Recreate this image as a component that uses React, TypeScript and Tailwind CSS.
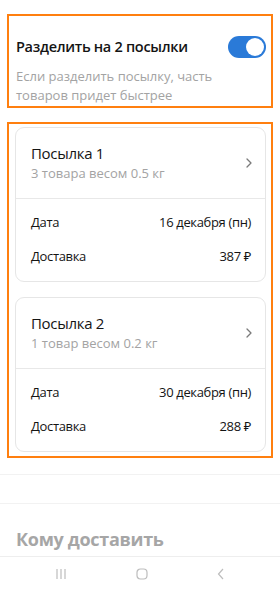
import React, { useState } from 'react'

interface Parcel {
  title: string
  subtitle: string
  date: string
  price: string
}

const parcels: Parcel[] = [
  { title: 'Посылка 1', subtitle: '3 товара весом 0.5 кг', date: '16 декабря (пн)', price: '387 ₽' },
  { title: 'Посылка 2', subtitle: '1 товар весом 0.2 кг', date: '30 декабря (пн)', price: '288 ₽' },
]

const ParcelCard: React.FC<{ parcel: Parcel }> = ({ parcel }) => (
  <div className="rounded-[9px] border border-[#e6e6e6] bg-white">
    <div className="flex items-center justify-between pl-[15px] pr-[13px] pt-[15px] pb-[16px] border-b border-[#e8e8e8]">
      <div>
        <div className="text-[15px] leading-[20px] tracking-[-0.3px] text-[#141414]">{parcel.title}</div>
        <div className="text-[13px] leading-[18px] text-[#a3a3a3] mt-[1px]">{parcel.subtitle}</div>
      </div>
      <svg width="6" height="10" viewBox="0 0 6 10" fill="none">
        <path d="M1 1l4 4-4 4" stroke="#7a7a7a" strokeWidth="1.3" strokeLinecap="round" strokeLinejoin="round" />
      </svg>
    </div>
    <div className="pl-[15px] pr-[14px] pt-[13px] pb-[15px] flex flex-col gap-[14px] text-[13px] leading-[20px] tracking-[-0.35px] text-[#141414]">
      <div className="flex justify-between">
        <span>Дата</span>
        <span>{parcel.date}</span>
      </div>
      <div className="flex justify-between">
        <span>Доставка</span>
        <span>{parcel.price}</span>
      </div>
    </div>
  </div>
)

export default function App() {
  const [split, setSplit] = useState(true)

  return (
    <div
      className="w-[280px] h-[591px] bg-white overflow-hidden flex flex-col"
      style={{ fontFamily: '"Open Sans", "Noto Sans", sans-serif' }}
    >
      <div className="pt-[14px] px-[7px]">
        <div className="border-2 border-[#ff7f0f] pl-[7px] pr-[5px] pt-[20px] pb-[1px]">
          <div className="flex items-center justify-between h-[22px]">
            <span className="text-[14.5px] font-semibold leading-[22px] tracking-[-0.3px] text-[#141414]">
              Разделить на 2 посылки
            </span>
            <button
              type="button"
              onClick={() => setSplit(!split)}
              className={`w-[38px] h-[22px] rounded-full p-[2px] flex ${split ? 'bg-[#2a7ad8] justify-end' : 'bg-[#c4c4c4] justify-start'}`}
            >
              <span className="w-[18px] h-[18px] rounded-full bg-white block" />
            </button>
          </div>
          <p className="mt-[9px] text-[13px] leading-[19px] text-[#a3a3a3]">
            Если разделить посылку, часть
            <br />
            товаров придет быстрее
          </p>
        </div>
      </div>

      <div className="mt-[14px] px-[7px]">
        <div className="border-2 border-[#ff7f0f] pl-[6px] pr-[5px] pt-[3px] pb-[4px] flex flex-col gap-[15px]">
          {parcels.map((p) => (
            <ParcelCard key={p.title} parcel={p} />
          ))}
        </div>
      </div>

      <div className="mt-[16px] border-t border-[#f2f2f2] h-[29px]" />
      <div className="border-t border-[#f2f2f2]" />

      <div className="pl-[16px] pt-[23px] text-[18px] font-bold leading-[24px] tracking-[-0.3px] text-[#a6a6a6]">
        Кому доставить
      </div>

      <div className="mt-auto h-[35px] border-t border-[#eeeeee] flex items-center justify-around px-[20px]">
        <svg width="12" height="12" viewBox="0 0 12 12" fill="none">
          <path d="M2 1v10M6 1v10M10 1v10" stroke="#bdbdbd" strokeWidth="1.2" />
        </svg>
        <svg width="12" height="12" viewBox="0 0 12 12" fill="none">
          <rect x="1" y="1" width="10" height="10" rx="3.5" stroke="#bdbdbd" strokeWidth="1.2" />
        </svg>
        <svg width="8" height="12" viewBox="0 0 8 12" fill="none">
          <path d="M6 1L1.5 6 6 11" stroke="#bdbdbd" strokeWidth="1.2" />
        </svg>
      </div>
    </div>
  )
}
